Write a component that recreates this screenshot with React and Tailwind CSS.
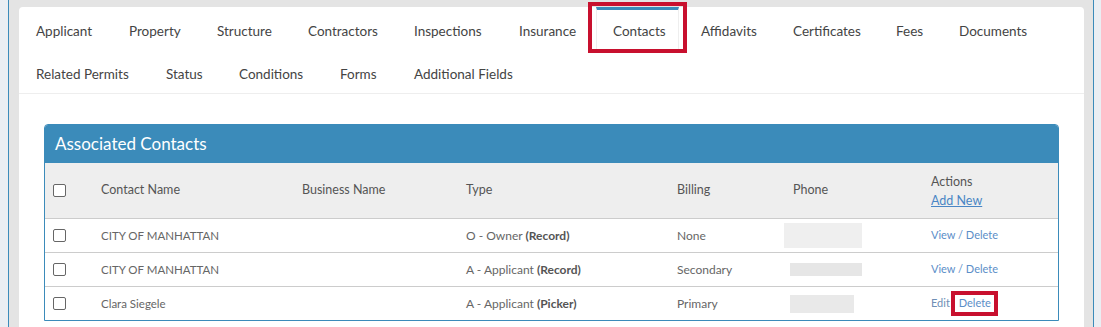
import React from 'react';

const tabRows = [
    [
        ['Applicant', 'w-[88px]'], ['Property', 'w-[83px]'], ['Structure', 'w-[86px]'], ['Contractors', 'w-[101px]'],
        ['Inspections', 'w-[100px]'], ['Insurance', 'w-[89px]'], ['Contacts', 'w-[83px]'], ['Affidavits', 'w-[87px]'],
        ['Certificates', 'w-[98px]'], ['Fees', 'w-[58px]'], ['Documents', 'w-[99px]'],
    ],
    [
        ['Related Permits', 'w-[125px]'], ['Status', 'w-[68px]'], ['Conditions', 'w-[96px]'], ['Forms', 'w-[69px]'],
        ['Additional Fields', 'w-auto'],
    ],
];

const contacts = [
    { name: 'CITY OF MANHATTAN', type: 'O - Owner', source: '(Record)', billing: 'None', phone: 'ml-[-1px] w-[78px] h-[25px] bg-[#efefef]', edit: false },
    { name: 'CITY OF MANHATTAN', type: 'A - Applicant', source: '(Record)', billing: 'Secondary', phone: 'ml-[5px] w-[72px] h-[13px] bg-[#e6e6e6]', edit: false },
    { name: 'Clara Siegele', type: 'A - Applicant', source: '(Picker)', billing: 'Primary', phone: 'ml-[5px] w-[64px] h-[18px] bg-[#e9e9e9]', edit: true },
];

const cols = 'grid grid-cols-[48px_201px_164px_211px_116px_138px_135px]';

const Checkbox = () => (
    <span className="block w-[13px] h-[13px] rounded-[2px] border border-[#666] bg-white" />
);

const Tab = ({ label, width }) => {
    const active = label === 'Contacts';
    return (
        <div
            className={
                active
                    ? `relative ${width} shrink-0 whitespace-nowrap px-4 pt-[11px] pb-[9px] leading-[20px] border-t-[3px] border-t-[#3b8bba] border-x border-x-[#eeeeee] bg-white text-[#444]`
                    : `${width} shrink-0 whitespace-nowrap px-4 pt-[11px] pb-[9px] leading-[20px] border-t-[3px] border-t-transparent border-x border-x-transparent text-[#444]`
            }
        >
            {label}
            {active && <span className="absolute -left-[9px] -right-[9px] -top-[8px] -bottom-[3px] border-[4px] border-[#c8102e]" />}
        </div>
    );
};

const App = () => {
    return (
        <div className="w-[1101px] h-[327px] overflow-hidden bg-[#eaeef3] pl-[8px] pr-[7px] font-['Lato',sans-serif]">
            <div className="h-full border-x border-[#3b8bba] bg-[#e4e4e4] pl-[10px] pr-[9px] pt-[7px]">
                <div className="h-full bg-white rounded-t-[4px]">

                    <div className="border-b border-[#eeeeee] text-[13.5px]">
                        {tabRows.map((row, i) => (
                            <div key={i} className="flex gap-[5px]">
                                {row.map(([label, width]) => <Tab key={label} label={label} width={width} />)}
                            </div>
                        ))}
                    </div>

                    <div className="mx-[25px] mt-[30px] border border-[#3b8bba] rounded-t-[4px] overflow-hidden">
                        <div className="h-[38px] bg-[#3b8bba] px-[10px] flex items-center text-white text-[17px]">
                            Associated Contacts
                        </div>

                        <div className={`${cols} h-[56px] items-center bg-[#eeeeee] border-b border-[#cccccc] text-[12.5px] text-[#555]`}>
                            <div className="pl-[8px]"><Checkbox /></div>
                            <div className="pl-[8px]">Contact Name</div>
                            <div className="pl-[8px]">Business Name</div>
                            <div className="pl-[8px]">Type</div>
                            <div className="pl-[8px]">Billing</div>
                            <div className="pl-[8px]">Phone</div>
                            <div className="pl-[8px] flex flex-col leading-[19px]">
                                <span>Actions</span>
                                <a className="text-[#4a86c5] underline">Add New</a>
                            </div>
                        </div>

                        {contacts.map((c, i) => (
                            <div key={i} className={`${cols} h-[33px] items-center text-[12px] text-[#666] ${i > 0 ? 'border-t border-[#cccccc] h-[34px]' : ''}`}>
                                <div className="pl-[8px]"><Checkbox /></div>
                                <div className="pl-[8px] text-[11.5px]">{c.name}</div>
                                <div className="pl-[8px]"></div>
                                <div className="pl-[8px]">
                                    {c.type} <span className="font-bold text-[#555]">{c.source}</span>
                                </div>
                                <div className="pl-[8px]">{c.billing}</div>
                                <div>
                                    <div className={`${c.phone} blur-[0.5px]`} />
                                </div>
                                <div className="pl-[8px] text-[11px] text-[#5b8ec8]">
                                    {c.edit ? (
                                        <span>
                                            <span className="text-[#6f8fb5]">Edit</span>{' '}
                                            <span className="relative ml-[6px]">
                                                Delete
                                                <span className="absolute -left-[8px] -right-[7px] -top-[5px] -bottom-[7px] border-[4px] border-[#c8102e]" />
                                            </span>
                                        </span>
                                    ) : (
                                        'View / Delete'
                                    )}
                                </div>
                            </div>
                        ))}
                    </div>

                </div>
            </div>
        </div>
    );
};

export default App;
